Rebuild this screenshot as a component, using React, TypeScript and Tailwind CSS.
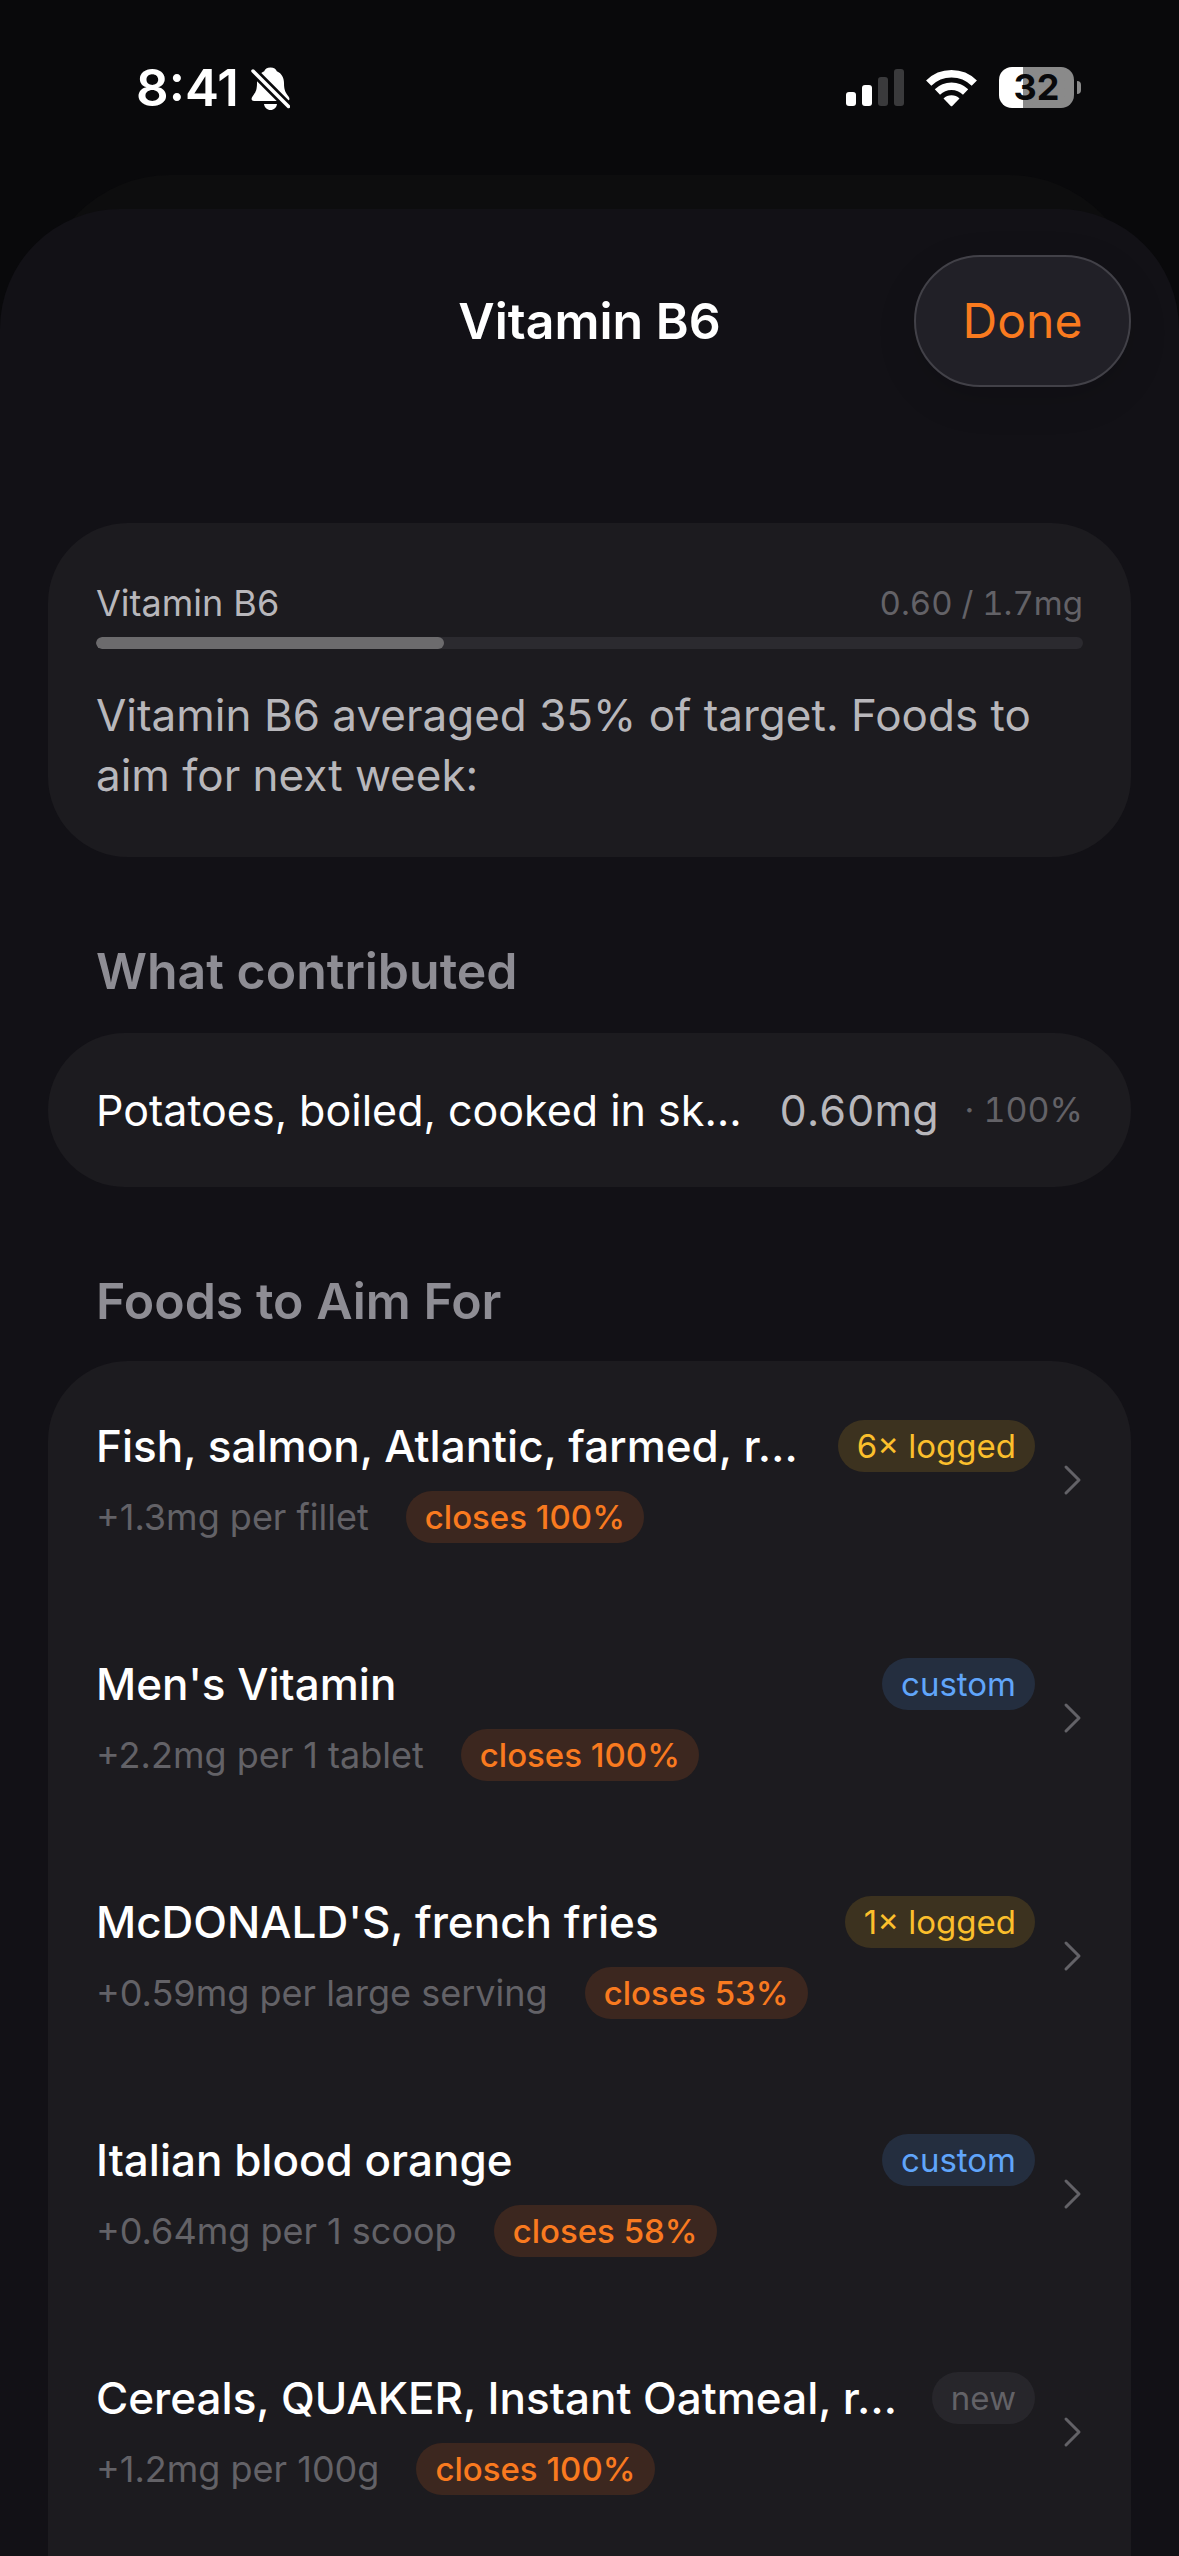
import React from 'react';

type TagKind = 'logged' | 'custom' | 'new';

interface Food {
  id: number;
  name: string;
  amount: string;
  closes: number;
  tag: string;
  kind: TagKind;
}

// long names arrive already shortened
const foods: Food[] = [
  { id: 1, name: 'Fish, salmon, Atlantic, farmed, r…', amount: '+1.3mg per fillet', closes: 100, tag: '6× logged', kind: 'logged' },
  { id: 2, name: "Men's Vitamin", amount: '+2.2mg per 1 tablet', closes: 100, tag: 'custom', kind: 'custom' },
  { id: 3, name: "McDONALD'S, french fries", amount: '+0.59mg per large serving', closes: 53, tag: '1× logged', kind: 'logged' },
  { id: 4, name: 'Italian blood orange', amount: '+0.64mg per 1 scoop', closes: 58, tag: 'custom', kind: 'custom' },
  { id: 5, name: 'Cereals, QUAKER, Instant Oatmeal, r…', amount: '+1.2mg per 100g', closes: 100, tag: 'new', kind: 'new' },
];

const tagStyles: Record<TagKind, string> = {
  logged: 'bg-[#3c321f] text-[#fbbf2c]',
  custom: 'bg-[#242e3f] text-[#60a5fa]',
  new: 'bg-[#27262b] text-[#636267]',
};

const StatusBar: React.FC = () => (
  <div className="flex h-[175px] items-start justify-between pt-[64px] pr-[98px] pl-[136px]">
    <div className="flex items-center gap-[12px]">
      <span className="text-[51px] leading-[48px] font-semibold">8:41</span>
      <svg className="h-[43px] w-[39px]" viewBox="0 0 39 43" aria-label="Silent mode">
        <path
          fill="#fff"
          d="M19.5 .5C23 .5 25 2 25.8 4.2C31 6.5 33 11 33 16C33 24 35 26 37.5 29.5C39.5 32.5 38 34 36 34H3C1 34-.5 32.5 1.5 29.5C4 26 6 24 6 16C6 11 8 6.5 13.2 4.2C14 2 16 .5 19.5 .5Z"
        />
        <path fill="#fff" d="M13 37H26C25.5 40.5 23 43 19.5 43C16 43 13.5 40.5 13 37Z" />
        <path stroke="#09090b" strokeWidth="9" d="M-1 1L41 43" />
        <path stroke="#fff" strokeWidth="3.5" strokeLinecap="round" d="M2 4L37.5 39.5" />
      </svg>
    </div>
    <div className="flex items-center gap-[22px] pt-[3px]">
      <svg className="h-[38px] w-[58px]" viewBox="0 0 58 38" aria-label="Cellular signal">
        <rect x="0" y="23" width="10" height="14" rx="3" fill="#fff" />
        <rect x="16" y="16" width="10" height="21" rx="3" fill="#fff" />
        <rect x="32" y="8" width="10" height="29" rx="3" fill="#3a3a3c" />
        <rect x="48" y="0" width="10" height="37" rx="3" fill="#3a3a3c" />
      </svg>
      <svg className="h-[38px] w-[51px]" viewBox="0 0 51 38" aria-label="Wi-Fi">
        <g fill="none" stroke="#fff" strokeWidth="7.5">
          <path d="M2.7 14.2A32.5 32.5 0 0 1 48.3 14.2" />
          <path d="M11.4 23A20.2 20.2 0 0 1 39.6 23" />
        </g>
        <path fill="#fff" d="M17.5 29.5A11.5 11.5 0 0 1 33.5 29.5L26.5 36.7Q25.5 37.7 24.5 36.7Z" />
      </svg>
      <div className="flex items-center gap-[3px]">
        <div className="flex h-[41px] w-[75px] items-center justify-center rounded-[13px] bg-linear-to-r from-white from-32% to-[#8a8a8a] to-32% text-[36px] leading-[41px] font-bold text-[#09090b]">
          32
        </div>
        <div className="h-[13px] w-[4px] rounded-r-full bg-[#8a8a8a]" />
      </div>
    </div>
  </div>
);

const Chevron: React.FC = () => (
  <svg className="h-[32px] w-[20px] shrink-0" viewBox="0 0 20 32" fill="none" aria-hidden="true">
    <path d="M3 3L16 16L3 29" stroke="#636267" strokeWidth="3" strokeLinecap="round" strokeLinejoin="round" />
  </svg>
);

const FoodRow: React.FC<{ food: Food }> = ({ food }) => (
  <li>
    <button type="button" className="flex h-[238px] w-full items-center gap-[28px] text-left">
      <span className="flex flex-1 flex-col gap-[15px] pb-[2px]">
        <span className="flex items-center justify-between">
          <span className="text-[44px] leading-[60px] font-medium whitespace-nowrap text-white">{food.name}</span>
          <span className={`shrink-0 rounded-full px-[19px] text-[33px] leading-[52px] ${tagStyles[food.kind]}`}>{food.tag}</span>
        </span>
        <span className="flex items-center gap-[37px]">
          <span className="text-[36px] leading-[52px] text-[#636267]">{food.amount}</span>
          <span className="rounded-full bg-[#3c271f] px-[19px] text-[33px] leading-[52px] font-medium text-[#f97a1f]">closes {food.closes}%</span>
        </span>
      </span>
      <Chevron />
    </button>
  </li>
);

const App: React.FC = () => {
  const average = 0.6;
  const target = 1.7;

  return (
    <div className="flex min-h-screen flex-col bg-[#09090b] font-['Inter',sans-serif] text-white">
      <StatusBar />

      {/* edge of the sheet underneath */}
      <div className="mx-[40px] -mb-[106px] h-[140px] rounded-t-[130px] bg-[#0d0d0e]" />

      <main className="flex flex-1 flex-col rounded-t-[120px] bg-[#121116] px-[48px] pt-[46px]">
        <header className="grid grid-cols-3 items-center">
          <h1 className="col-start-2 text-center text-[50px] leading-[60px] font-semibold whitespace-nowrap">Vitamin B6</h1>
          <button
            type="button"
            className="h-[132px] w-[217px] justify-self-end rounded-full border-2 border-[#424148] bg-[#212027] text-[48px] text-[#f97a1f] shadow-[0_12px_40px_rgba(0,0,0,0.12)]"
          >
            Done
          </button>
        </header>

        <section className="mt-[136px] rounded-[80px] bg-[#1c1b1f] px-[48px] pt-[56px] pb-[52px]">
          <div className="flex items-center justify-between text-[36px] leading-[48px]">
            <span className="text-[#b8b7bb]">Vitamin B6</span>
            <span className="text-[33px] text-[#636267] tabular-nums">0.60 / 1.7mg</span>
          </div>
          <div className="mt-[10px] h-[12px] overflow-hidden rounded-full bg-[#2b2a2f]">
            <div className="h-full rounded-full bg-[#6c6b6d]" style={{ width: `${(average / target) * 100}%` }} />
          </div>
          <p className="mt-[36px] text-[44px] leading-[60px] text-[#b8b7bb]">
            Vitamin B6 averaged 35% of target. Foods to aim for next week:
          </p>
        </section>

        <h2 className="mt-[84px] px-[48px] text-[50px] leading-[60px] font-semibold text-[#8e8d94]">What contributed</h2>
        <section className="mt-[32px] flex h-[154px] items-center rounded-full bg-[#1c1b1f] px-[48px] whitespace-nowrap">
          <span className="flex-1 text-[43px] leading-[60px]">Potatoes, boiled, cooked in sk…</span>
          <span className="text-[43px] leading-[60px] text-[#b8b7bb] tabular-nums">0.60mg</span>
          <span className="ml-[26px] text-[34px] leading-[60px] text-[#636267] tabular-nums">· 100%</span>
        </section>

        <h2 className="mt-[84px] px-[48px] text-[50px] leading-[60px] font-semibold text-[#8e8d94]">Foods to Aim For</h2>
        <ul className="mt-[30px] flex-1 rounded-t-[80px] bg-[#1c1b1f] px-[48px]">
          {foods.map((food) => (
            <FoodRow key={food.id} food={food} />
          ))}
        </ul>
      </main>
    </div>
  );
};

export default App;
